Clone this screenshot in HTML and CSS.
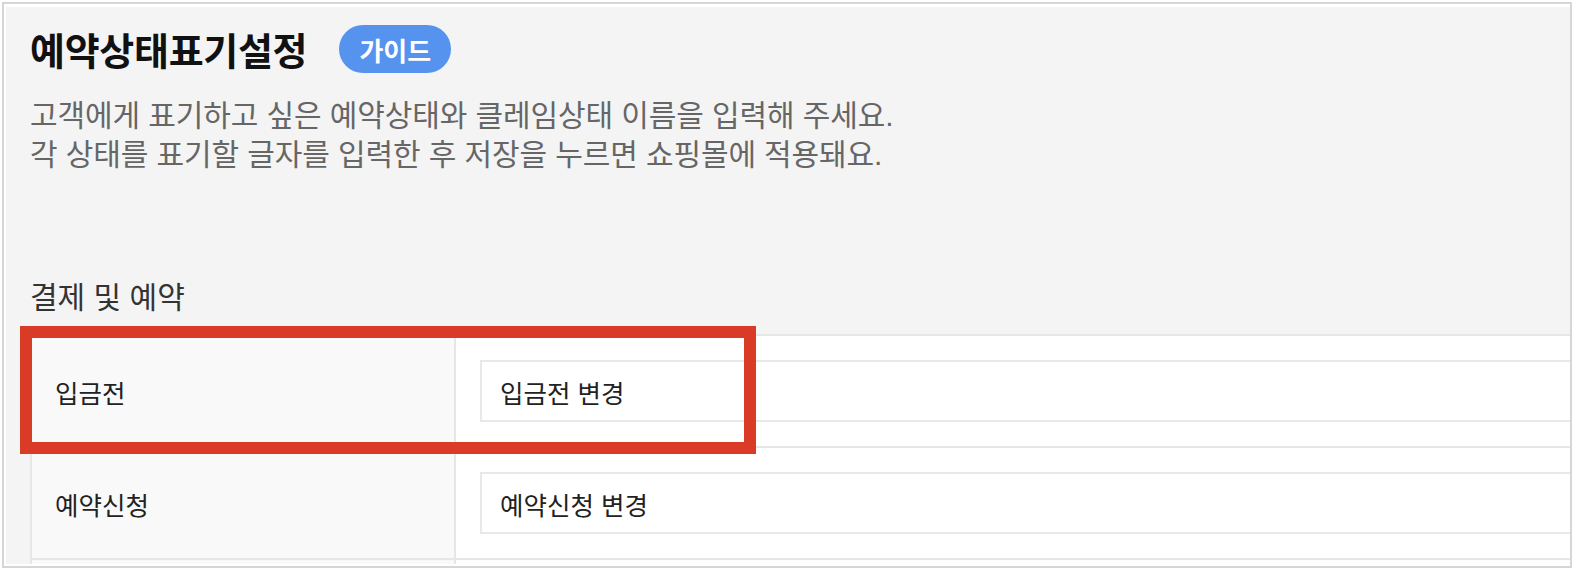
FILE: index.html
```html
<!DOCTYPE html>
<html lang="ko">
<head>
<meta charset="utf-8">
<title>예약상태표기설정</title>
<link rel="stylesheet" href="styles.css">
</head>
<body>
<div class="frame">
  <div class="page">
    <div class="header">
      <h1 class="title">예약상태표기설정</h1>
      <span class="badge">가이드</span>
    </div>
    <div class="desc">
      <p class="desc-line">고객에게 표기하고 싶은 예약상태와 클레임상태 이름을 입력해 주세요.</p>
      <p class="desc-line">각 상태를 표기할 글자를 입력한 후 저장을 누르면 쇼핑몰에 적용돼요.</p>
    </div>
    <h2 class="section">결제 및 예약</h2>
    <div class="table">
      <div class="row">
        <div class="label">입금전</div>
        <div class="value"><div class="input">입금전 변경</div></div>
      </div>
      <div class="row">
        <div class="label">예약신청</div>
        <div class="value"><div class="input">예약신청 변경</div></div>
      </div>
      <div class="row">
        <div class="label"></div>
        <div class="value"></div>
      </div>
    </div>
    <div class="highlight"></div>
  </div>
</div>
</body>
</html>
```
FILE: styles.css
```css
* { box-sizing: border-box; }
html, body { margin: 0; padding: 0; background: #ffffff; }
body {
  font-family: "Noto Sans CJK KR", "Noto Sans", sans-serif;
  color: #222;
}
.frame {
  margin: 2px;
  width: 1570px;
  height: 566px;
  border: 2px solid #d6d6d6;
  padding: 3px 0 2px 2px;
  background: #fff;
}
.page {
  position: relative;
  height: 100%;
  background: #f4f4f4;
  overflow: hidden;
  padding: 18px 0 0 24px;
}
.header {
  display: flex;
  align-items: center;
  gap: 32px;
  height: 48px;
}
.title {
  margin: 0;
  font-size: 38px;
  font-weight: 700;
  letter-spacing: -0.3px;
  color: #111;
  line-height: 48px;
}
.badge {
  display: flex;
  align-items: center;
  justify-content: center;
  width: 112px;
  height: 48px;
  border-radius: 24px;
  background: #5593ef;
  color: #fff;
  font-size: 26px;
  font-weight: 700;
}
.desc {
  margin-top: 23px;
  display: flex;
  flex-direction: column;
}
.desc-line {
  margin: 0;
  height: 39px;
  font-family: "Liberation Sans", "Noto Sans CJK KR", sans-serif;
  font-size: 30px;
  line-height: 39px;
  letter-spacing: -0.1px;
  color: #666;
  white-space: nowrap;
}
.section {
  margin: 104px 0 0 0;
  font-size: 30px;
  font-weight: 400;
  line-height: 34px;
  color: #333;
}
.table {
  margin: 22px -60px 0 0;
  border-top: 2px solid #e6e6e6;
  border-left: 2px solid #e6e6e6;
  background: #fff;
}
.row {
  display: flex;
  height: 112px;
  border-bottom: 2px solid #e6e6e6;
}
.label {
  width: 424px;
  flex: none;
  display: flex;
  align-items: center;
  padding-left: 23px;
  background: #f9f9f9;
  border-right: 2px solid #e6e6e6;
  font-size: 25.5px;
  color: #222;
}
.value {
  flex: 1;
  padding: 24px 0 24px 24px;
}
.input {
  height: 62px;
  border: 2px solid #e8e8e8;
  background: #fff;
  display: flex;
  align-items: center;
  padding-left: 18px;
  font-size: 25.5px;
  color: #222;
}
.highlight {
  position: absolute;
  left: 14px;
  top: 319px;
  width: 736px;
  height: 128px;
  border: 12px solid #da3b26;
  pointer-events: none;
}
```
